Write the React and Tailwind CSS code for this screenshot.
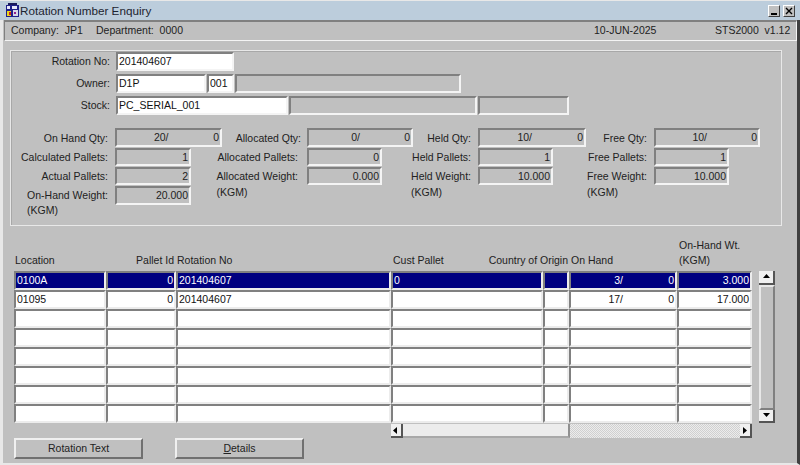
import React from "react";

function Field({ className = "", children }) {
  return (
    <div className={"flex items-center border-2 border-t-[#808080] border-l-[#808080] border-b-[#f4f4f4] border-r-[#f4f4f4] px-[1px] leading-none whitespace-nowrap overflow-hidden " + className}>
      {children}
    </div>
  );
}

function Input({ className = "", children }) {
  return <Field className={"bg-white h-[19px] text-[#111] " + className}>{children}</Field>;
}

function Qty({ a, b, className = "", split = "w-[50%]" }) {
  return (
    <div className={"flex items-center " + className}>
      <span className={"text-right shrink-0 " + split}>{a}</span>
      <span className="flex-1 text-right">{b}</span>
    </div>
  );
}

function ReadOnly({ className = "", children }) {
  return <Field className={"justify-end bg-[#c0c0c0] text-[#222] " + className}>{children}</Field>;
}

function StatLabel({ children, className = "", pad = "pr-[7px]", lead = "leading-[17px]" }) {
  return <div className={"justify-self-end text-[#222] whitespace-nowrap " + pad + " " + lead + " " + className}>{children}</div>;
}

function FormLabel({ children }) {
  return <div className="w-[105px] text-right pr-[6px] pt-[1px] text-[#222]">{children}</div>;
}

const columns = [
  { key: "loc", w: "w-[92px]", pad: "px-[1px]" },
  { key: "pid", w: "w-[70px]", pad: "px-[2px]" },
  { key: "rot", w: "w-[215px]", pad: "px-[1px]" },
  { key: "cust", w: "w-[152px]", pad: "px-[2px]" },
  { key: "coo", w: "w-[26px]", pad: "px-[1px]" },
  { key: "hand", w: "w-[108px]", pad: "px-[2px]" },
  { key: "wt", w: "w-[75px]", pad: "px-[2px]" },
];

const rows = [
  { loc: "0100A", pid: "0", rot: "201404607", cust: "0", a: "3/", b: "0", wt: "3.000", sel: true },
  { loc: "01095", pid: "0", rot: "201404607", cust: "", a: "17/", b: "0", wt: "17.000" },
  {}, {}, {}, {}, {}, {},
];

function Cell({ w, sel, right, children }) {
  return (
    <div className={"h-[19px] shrink-0 flex items-center border-2 border-t-[#808080] border-l-[#808080] border-b-[#ececec] border-r-[#ececec] px-[1px] leading-none whitespace-nowrap " + w + " " + (right ? "justify-end " : "") + (sel ? "bg-[#000080] text-white" : "bg-white text-[#111]")}>
      {children}
    </div>
  );
}

function Arrow({ dir }) {
  const pts = { up: "1,5 8,5 4.5,1", down: "1,2 8,2 4.5,6", left: "5,1 5,8 1,4.5", right: "2,1 2,8 6,4.5" }[dir];
  return (
    <svg width="9" height="9" viewBox="0 0 9 9">
      <polygon points={pts} fill="#000" />
    </svg>
  );
}

function ScrollBtn({ dir, className = "" }) {
  return (
    <div className={"flex items-center justify-center bg-[#f0f0f0] border-r-2 border-b-2 border-r-[#555] border-b-[#555] shrink-0 " + className}>
      <Arrow dir={dir} />
    </div>
  );
}

function Btn({ children }) {
  return (
    <div className="w-[129px] h-[21px] flex items-center justify-center bg-[#c0c0c0] border-2 border-t-[#f0f0f0] border-l-[#f0f0f0] border-b-[#707070] border-r-[#707070] text-[#222]">
      {children}
    </div>
  );
}

export default function App() {
  return (
    <div className="w-[800px] h-[465px] overflow-hidden bg-[#c0c0c0] font-['Liberation_Sans',Arial,sans-serif] text-[10.5px] flex flex-col border-t border-t-[#e8e8e8]">
      <div className="h-[19px] shrink-0 bg-[#bccddc] flex items-center pl-[5px] pr-[5px]">
        <svg width="15" height="15" viewBox="0 0 15 15" className="shrink-0">
          <rect x="3" y="0" width="9" height="3" fill="#1a1a5a" />
          <rect x="1" y="2" width="13" height="12" fill="#20208a" />
          <rect x="2" y="3" width="3" height="3" fill="#e8e8f8" />
          <rect x="7" y="3" width="5" height="3" fill="#e8e8f8" />
          <rect x="2" y="8" width="4" height="5" fill="#e8d820" />
          <rect x="4" y="9" width="2" height="3" fill="#d02020" />
          <rect x="8" y="7" width="5" height="6" fill="#d8d8e8" />
          <rect x="9" y="9" width="2" height="2" fill="#902090" />
        </svg>
        <span className="text-[11.7px] text-[#1c2430] leading-none">Rotation Number Enquiry</span>
        <div className="ml-auto flex gap-[3px]">
          <div className="w-[12px] h-[12px] bg-[#c0c0c0] border-r border-b border-r-[#404040] border-b-[#404040] border-t border-l border-t-white border-l-white flex items-end justify-center">
            <div className="w-[6px] h-[2px] bg-black mb-[1px]"></div>
          </div>
          <div className="w-[12px] h-[12px] bg-[#c0c0c0] border-r border-b border-r-[#404040] border-b-[#404040] border-t border-l border-t-white border-l-white flex items-center justify-center">
            <svg width="8" height="8" viewBox="0 0 8 8"><path d="M1 1 L7 7 M7 1 L1 7" stroke="#000" strokeWidth="1.4" /></svg>
          </div>
        </div>
      </div>

      <div className="flex-1 flex flex-col border-l-[3px] border-l-[#e8e8e8] border-r-[3px] border-r-[#404040] border-b-2 border-b-[#e8e8e8] min-h-0">
        <div className="ml-[1px] h-[21px] shrink-0 flex items-center whitespace-nowrap border-t-2 border-t-[#808080] border-b border-b-[#f4f4f4] border-l border-l-[#808080] border-r border-r-[#f4f4f4] pl-[6px] text-[#222]">
          <span className="w-[85px]">Company:&nbsp; JP1</span>
          <span className="w-[498px]">Department:&nbsp; 0000</span>
          <span className="w-[121px]">10-JUN-2025</span>
          <span>STS2000&nbsp; v1.12</span>
        </div>

        <div className="ml-[7px] mt-[9px] w-[772px] h-[176px] shrink-0 border border-[#e8e8e8] shadow-[inset_1px_1px_0_#a8a8a8] pt-[1px]">
          <div className="flex flex-col gap-[3px]">
            <div className="flex items-center">
              <FormLabel>Rotation No:</FormLabel>
              <Input className="w-[118px]">201404607</Input>
            </div>
            <div className="flex items-center">
              <FormLabel>Owner:</FormLabel>
              <Input className="w-[90px]">D1P</Input>
              <Input className="w-[27px] ml-[1px]">001</Input>
              <Field className="w-[226px] h-[19px] ml-[1px]"></Field>
            </div>
            <div className="flex items-center">
              <FormLabel>Stock:</FormLabel>
              <Input className="w-[172px]">PC_SERIAL_001</Input>
              <Field className="w-[188px] h-[19px] ml-[1px]"></Field>
              <Field className="w-[91px] h-[19px] ml-[1px]"></Field>
            </div>
          </div>

          <div className="mt-[13px] ml-[1px] grid grid-cols-[103px_107px_85px_106px_65px_108px_68px_106px] grid-rows-[20px_19px_19px_19px] gap-y-0 items-start">
            <StatLabel className="mt-[2px]">On Hand Qty:</StatLabel>
            <ReadOnly className="h-[19px] !justify-start"><Qty a="20/" b="0" className="w-full" /></ReadOnly>
            <StatLabel className="mt-[2px]" pad="pr-[6px]">Allocated Qty:</StatLabel>
            <ReadOnly className="h-[19px] !justify-start"><Qty a="0/" b="0" className="w-full" /></ReadOnly>
            <StatLabel className="mt-[2px]">Held Qty:</StatLabel>
            <ReadOnly className="h-[19px] !justify-start"><Qty a="10/" b="0" className="w-full" /></ReadOnly>
            <StatLabel className="mt-[2px]">Free Qty:</StatLabel>
            <ReadOnly className="h-[19px] !justify-start"><Qty a="10/" b="0" className="w-full" /></ReadOnly>

            <StatLabel className="mt-[1px]">Calculated Pallets:</StatLabel>
            <ReadOnly className="h-[18px] w-[76px]">1</ReadOnly>
            <StatLabel className="mt-[1px]" pad="pr-[9px]">Allocated Pallets:</StatLabel>
            <ReadOnly className="h-[18px] w-[75px]">0</ReadOnly>
            <StatLabel className="mt-[1px]">Held Pallets:</StatLabel>
            <ReadOnly className="h-[18px] w-[75px]">1</ReadOnly>
            <StatLabel className="mt-[1px]">Free Pallets:</StatLabel>
            <ReadOnly className="h-[18px] w-[75px]">1</ReadOnly>

            <StatLabel className="mt-[1px]">Actual Pallets:</StatLabel>
            <ReadOnly className="h-[18px] w-[76px]">2</ReadOnly>
            <StatLabel className="row-span-2 text-left mt-[1px]" pad="pr-[9px]" lead="leading-[16px]">Allocated Weight:<br />(KGM)</StatLabel>
            <ReadOnly className="h-[18px] w-[75px]">0.000</ReadOnly>
            <StatLabel className="row-span-2 text-left mt-[1px]" lead="leading-[16px]">Held Weight:<br />(KGM)</StatLabel>
            <ReadOnly className="h-[18px] w-[75px]">10.000</ReadOnly>
            <StatLabel className="row-span-2 text-left mt-[1px]" lead="leading-[16px]">Free Weight:<br />(KGM)</StatLabel>
            <ReadOnly className="h-[18px] w-[75px]">10.000</ReadOnly>

            <StatLabel className="text-left mt-[2px]" lead="leading-[15px]">On-Hand Weight:<br />(KGM)</StatLabel>
            <ReadOnly className="h-[19px] w-[76px]">20.000</ReadOnly>
          </div>
        </div>

        <div className="ml-[11px] mt-[14px] flex items-end h-[31px] shrink-0 text-[#222] leading-[15px] pb-[3px]">
          {columns.map((c) => (
            <div key={c.key} className={"shrink-0 " + c.pad + " " + c.w + (c.key === "pid" || c.key === "coo" ? " text-right whitespace-nowrap flex justify-end" : "")}>
              {c.key === "loc" && "Location"}
              {c.key === "pid" && "Pallet Id"}
              {c.key === "rot" && "Rotation No"}
              {c.key === "cust" && "Cust Pallet"}
              {c.key === "coo" && "Country of Origin"}
              {c.key === "hand" && "On Hand"}
              {c.key === "wt" && <>On-Hand Wt.<br />(KGM)</>}
            </div>
          ))}
        </div>

        <div className="ml-[11px] flex shrink-0 items-start">
          <div className="flex flex-col">
            {rows.map((r, i) => (
              <div key={i} className="flex">
                <Cell w="w-[92px]" sel={r.sel}>{r.loc}</Cell>
                <Cell w="w-[70px]" sel={r.sel} right>{r.pid}</Cell>
                <Cell w="w-[215px]" sel={r.sel}>{r.rot}</Cell>
                <Cell w="w-[152px]" sel={r.sel}>{r.cust}</Cell>
                <Cell w="w-[26px]" sel={r.sel}></Cell>
                <Cell w="w-[108px]" sel={r.sel}>
                  {r.a && <Qty a={r.a} b={r.b} className="w-full" />}
                </Cell>
                <Cell w="w-[75px]" sel={r.sel} right>{r.wt}</Cell>
              </div>
            ))}
          </div>
          <div className="ml-[7px] w-[16px] h-[152px] flex flex-col bg-[#c0c0c0]">
            <ScrollBtn dir="up" className="h-[14px] w-[16px]" />
            <div className="flex-1 border-2 border-t-[#e8e8e8] border-l-[#e8e8e8] border-b-[#808080] border-r-[#808080]"></div>
            <ScrollBtn dir="down" className="h-[13px] w-[16px]" />
          </div>
        </div>

        <div className="ml-[388px] mt-[1px] w-[361px] h-[14px] flex shrink-0 bg-[repeating-conic-gradient(#d0d0d0_0_25%,#ececec_0_50%)] bg-[length:2px_2px]">
          <ScrollBtn dir="left" className="h-[14px] w-[12px]" />
          <div className="w-[167px] h-[14px] bg-[#ececec] border-r-2 border-b-2 border-r-[#909090] border-b-[#a8a8a8]"></div>
          <ScrollBtn dir="right" className="h-[14px] w-[12px] ml-auto" />
        </div>

        <div className="ml-[11px] flex gap-[32px] shrink-0">
          <Btn>Rotation Text</Btn>
          <Btn><span><span className="underline">D</span>etails</span></Btn>
        </div>
      </div>
    </div>
  );
}
